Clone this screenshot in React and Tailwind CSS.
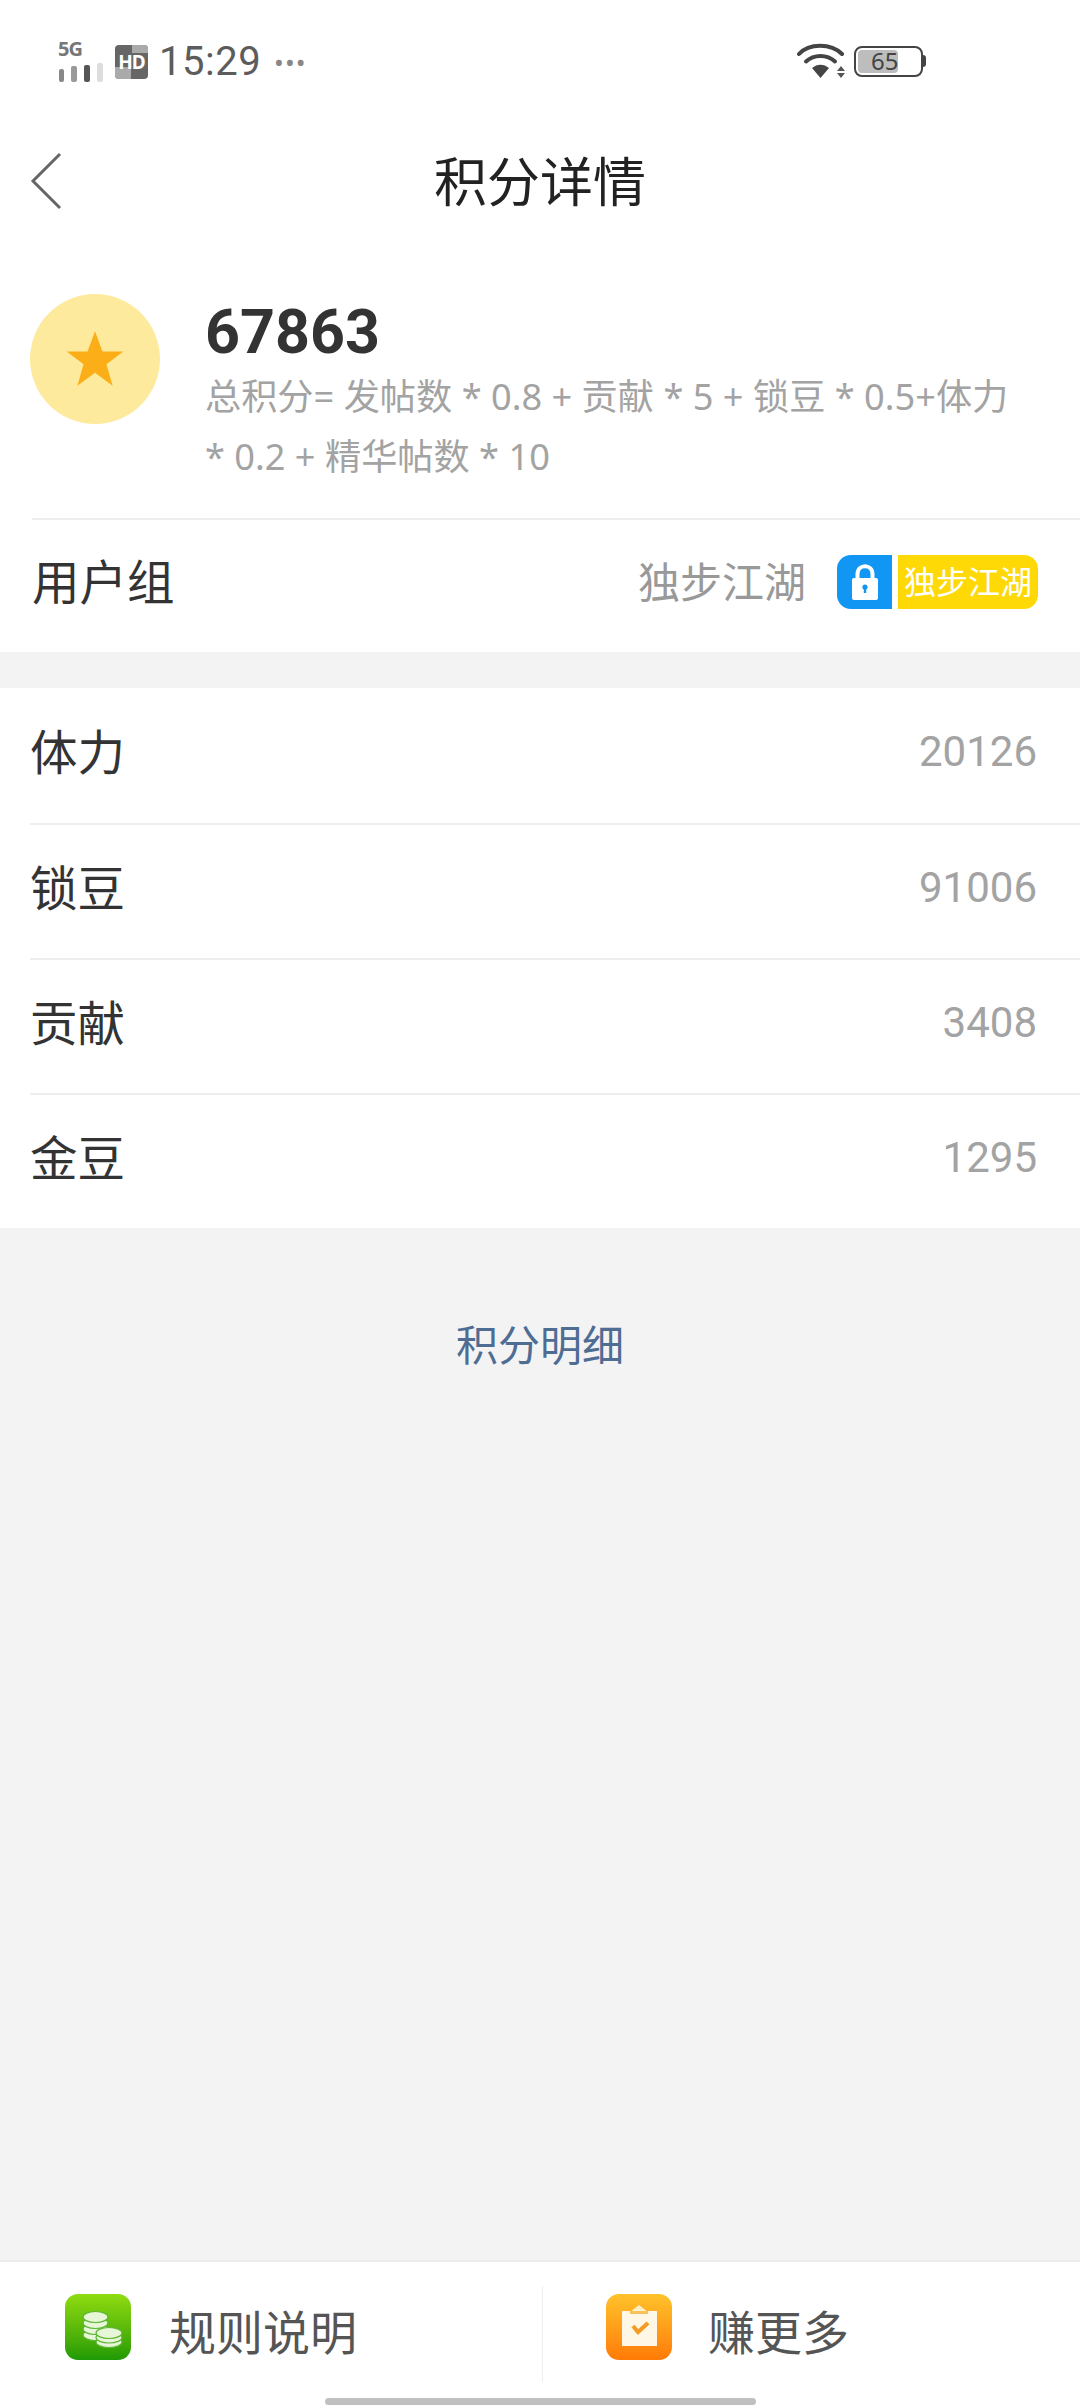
const font = { fontFamily: '"Noto Sans", "Noto Sans CJK SC", sans-serif' };

// ─── Icons ───────────────────────────────────────────────────────────────────

const SignalIcon = () => (
  <div className="relative w-[46px] h-[40px] shrink-0">
    <span className="absolute left-0 top-[-4px] text-[20px] leading-[22px] font-bold text-[#777] tracking-[-1px]">5G</span>
    <div className="absolute left-[1px] bottom-0 flex items-end gap-[7px]">
      <span className="w-[5px] h-[13px] rounded-[2px] bg-[#888]" />
      <span className="w-[6px] h-[16px] rounded-[2px] bg-[#999]" />
      <span className="w-[6px] h-[17px] rounded-[2px] bg-[#555]" />
      <span className="w-[6px] h-[19px] rounded-[2px] bg-[#ddd]" />
    </div>
  </div>
);

const HdIcon = () => (
  <div className="w-[33px] h-[34px] rounded-[4px] bg-[#666] flex items-center justify-center overflow-hidden relative shrink-0">
    <div className="absolute left-0 bottom-0 w-[16px] h-[12px] bg-[#aaa]" />
    <div className="absolute right-0 top-0 w-[16px] h-[8px] bg-[#aaa]" />
    <span className="relative text-white text-[19px] leading-none font-bold tracking-[-1px]">HD</span>
  </div>
);

const WifiIcon = () => (
  <svg width="50" height="38" viewBox="0 0 50 38" fill="none" className="shrink-0">
    <path d="M2 12 C12 1 34 1 45 12" stroke="#444" strokeWidth="4" strokeLinecap="round" />
    <path d="M9 19.5 C17 12 30 12 38 19.5" stroke="#444" strokeWidth="4" strokeLinecap="round" />
    <path d="M15 26 C20 21.5 27 21.5 32 26 L23.5 36 Z" fill="#444" />
    <path d="M44 24 L48 29 L40 29 Z M40 31 L48 31 L44 36 Z" fill="#555" />
  </svg>
);

const BatteryIcon = () => (
  <div className="flex items-center shrink-0">
    <div className="relative w-[69px] h-[31px] rounded-[8px] border-2 border-[#444] flex items-center">
      <div className="absolute left-[2px] top-[2px] bottom-[2px] w-[40px] rounded-[4px] bg-[#bdbdbd]" />
      <span className="relative pl-[15px] text-[24px] leading-[24px] text-[#444]">65</span>
    </div>
    <div className="w-[3px] h-[12px] rounded-r-[3px] bg-[#444]" />
  </div>
);

const StarIcon = () => (
  <svg width="64" height="64" viewBox="0 0 24 24" fill="#fbae17">
    <path d="M12 1.6 L14.8 9.2 L22.6 9.2 L16.3 14 L18.6 22 L12 17.2 L5.4 22 L7.7 14 L1.4 9.2 L9.2 9.2 Z" />
  </svg>
);

const LockIcon = () => (
  <svg width="28" height="38" viewBox="0 0 28 38" fill="none">
    <path d="M6.5 17 V11 C6.5 0.5 21.5 0.5 21.5 11 V17" stroke="#fff" strokeWidth="4" />
    <rect x="1" y="15" width="26" height="22" rx="2" fill="#fff" />
    <circle cx="14" cy="24" r="2.6" fill="#1296f3" />
    <rect x="12.8" y="24" width="2.4" height="6" fill="#1296f3" />
  </svg>
);

const CoinsIcon = () => (
  <div className="w-[66px] h-[66px] rounded-[13px] bg-gradient-to-b from-[#8fdc10] to-[#1c9a06] shrink-0">
    <svg width="66" height="66" viewBox="0 0 66 66">
      <g fill="#e6f6d6" stroke="#5cb534" strokeWidth="1.2">
        <ellipse cx="30.5" cy="41" rx="12.5" ry="5.5" />
        <ellipse cx="30.5" cy="35" rx="12.5" ry="5.5" />
        <ellipse cx="30.5" cy="29" rx="12.5" ry="5.5" />
        <ellipse cx="30.5" cy="23" rx="12.5" ry="5.5" />
        <ellipse cx="44" cy="48" rx="13" ry="5.5" />
        <ellipse cx="44" cy="43.5" rx="13" ry="5.5" />
        <ellipse cx="44" cy="39" rx="13" ry="5.5" />
      </g>
    </svg>
  </div>
);

const ClipboardIcon = () => (
  <div className="w-[66px] h-[66px] rounded-[13px] bg-gradient-to-b from-[#ffc22a] to-[#ff7a05] shrink-0">
    <svg width="66" height="66" viewBox="0 0 66 66">
      <rect x="16" y="17" width="35" height="35" fill="#fff7e6" />
      <path d="M24 18 L33 11 L42 18 Z" fill="#fff0c8" />
      <rect x="24" y="17" width="18" height="3" fill="#f9c25a" />
      <path d="M27 32 L32 38 L42 29" fill="none" stroke="#f59a23" strokeWidth="4" />
    </svg>
  </div>
);

// ─── Main Component ───────────────────────────────────────────────────────────

const rows = [
  { label: '体力', value: '20126' },
  { label: '锁豆', value: '91006' },
  { label: '贡献', value: '3408' },
  { label: '金豆', value: '1295' },
];

const App = () => {
  return (
    <div className="relative w-[1080px] h-[2408px] overflow-hidden flex flex-col bg-[#f3f3f4]" style={font}>
      {/* Status bar */}
      <div className="h-[120px] shrink-0 bg-white flex items-start justify-between pt-[42px] pl-[58px] pr-[154px]">
        <div className="flex items-center gap-[11px]">
          <SignalIcon />
          <HdIcon />
          <span className="text-[40px] leading-[38px] text-[#5c5c5c] tracking-[0.5px]" style={{ fontFamily: 'Roboto, sans-serif' }}>15:29</span>
          <span className="text-[26px] leading-[38px] text-[#888] tracking-[1px] ml-[2px]">•••</span>
        </div>
        <div className="flex items-center gap-[7px]">
          <WifiIcon />
          <BatteryIcon />
        </div>
      </div>

      {/* Nav */}
      <div className="relative h-[122px] shrink-0 bg-white flex items-center justify-center">
        <svg width="32" height="58" viewBox="0 0 32 58" fill="none" className="absolute left-[30px] top-[32px]">
          <path d="M30 2 L3 29 L30 56" stroke="#666" strokeWidth="3" />
        </svg>
        <span className="text-[53px] leading-none text-[#222]">积分详情</span>
      </div>

      {/* Summary */}
      <div className="bg-white h-[276px] shrink-0 pl-[30px] pt-[52px] flex items-start">
        <div className="w-[130px] h-[130px] rounded-full bg-[#feea9c] flex items-center justify-center shrink-0">
          <StarIcon />
        </div>
        <div className="ml-[45px] w-[815px]">
          <div className="mt-[6px] text-[61px] leading-[64px] font-bold text-[#333]" style={{ fontFamily: 'Roboto, sans-serif' }}>67863</div>
          <p className="mt-[2px] text-[36.2px] leading-[60px] text-[#a3a3a3]">总积分= 发帖数 * 0.8 + 贡献 * 5 + 锁豆 * 0.5+体力 * 0.2 + 精华帖数 * 10</p>
        </div>
      </div>

      {/* User group */}
      <div className="bg-white h-[134px] shrink-0 pl-[32px]">
        <div className="h-full border-t-2 border-[#eeeeee] pl-0 pr-[42px] pb-[9px] flex items-center justify-between">
          <span className="text-[47.5px] leading-none text-[#333]">用户组</span>
          <div className="flex items-center">
            <span className="text-[42px] leading-none text-[#999]">独步江湖</span>
            <div className="ml-[31px] w-[55px] h-[54px] rounded-l-[14px] bg-[#1296f3] flex items-center justify-center">
              <LockIcon />
            </div>
            <div className="ml-[6px] w-[140px] h-[54px] rounded-r-[14px] bg-[#ffd906] flex items-center justify-center text-[32px] leading-none text-white">独步江湖</div>
          </div>
        </div>
      </div>

      {/* Stats */}
      <div className="mt-[36px] bg-white shrink-0 pl-[30px]">
        {rows.map((row, i) => (
          <div key={row.label} className={`h-[135px] pr-[43px] pb-[8px] flex items-center justify-between ${i > 0 ? 'border-t-2 border-[#eeeeee]' : ''}`}>
            <span className="text-[47.5px] leading-none text-[#333]">{row.label}</span>
            <span className="text-[42px] leading-none text-[#a3a3a3]" style={{ fontFamily: 'Roboto, sans-serif' }}>{row.value}</span>
          </div>
        ))}
      </div>

      {/* Detail link */}
      <div className="h-[234px] shrink-0 flex items-center justify-center">
        <span className="text-[42px] leading-none text-[#4f6c92]">积分明细</span>
      </div>

      <div className="flex-1" />

      {/* Footer */}
      <div className="h-[148px] shrink-0 bg-white border-t-2 border-[#ececec] flex items-start pt-[24px]">
        <div className="w-[543px] h-[96px] border-r border-[#eeeeee] pl-[65px] pt-[8px] flex items-start gap-[38px]">
          <CoinsIcon />
          <span className="text-[47px] leading-[76px] text-[#555]">规则说明</span>
        </div>
        <div className="pl-[63px] pt-[8px] flex items-start gap-[36px]">
          <ClipboardIcon />
          <span className="text-[47px] leading-[76px] text-[#555]">赚更多</span>
        </div>
      </div>

      {/* Home indicator */}
      <div className="absolute left-[325px] bottom-[3px] w-[431px] h-[7px] rounded-full bg-[#c0c0c0]" />
    </div>
  );
};

export default App;
